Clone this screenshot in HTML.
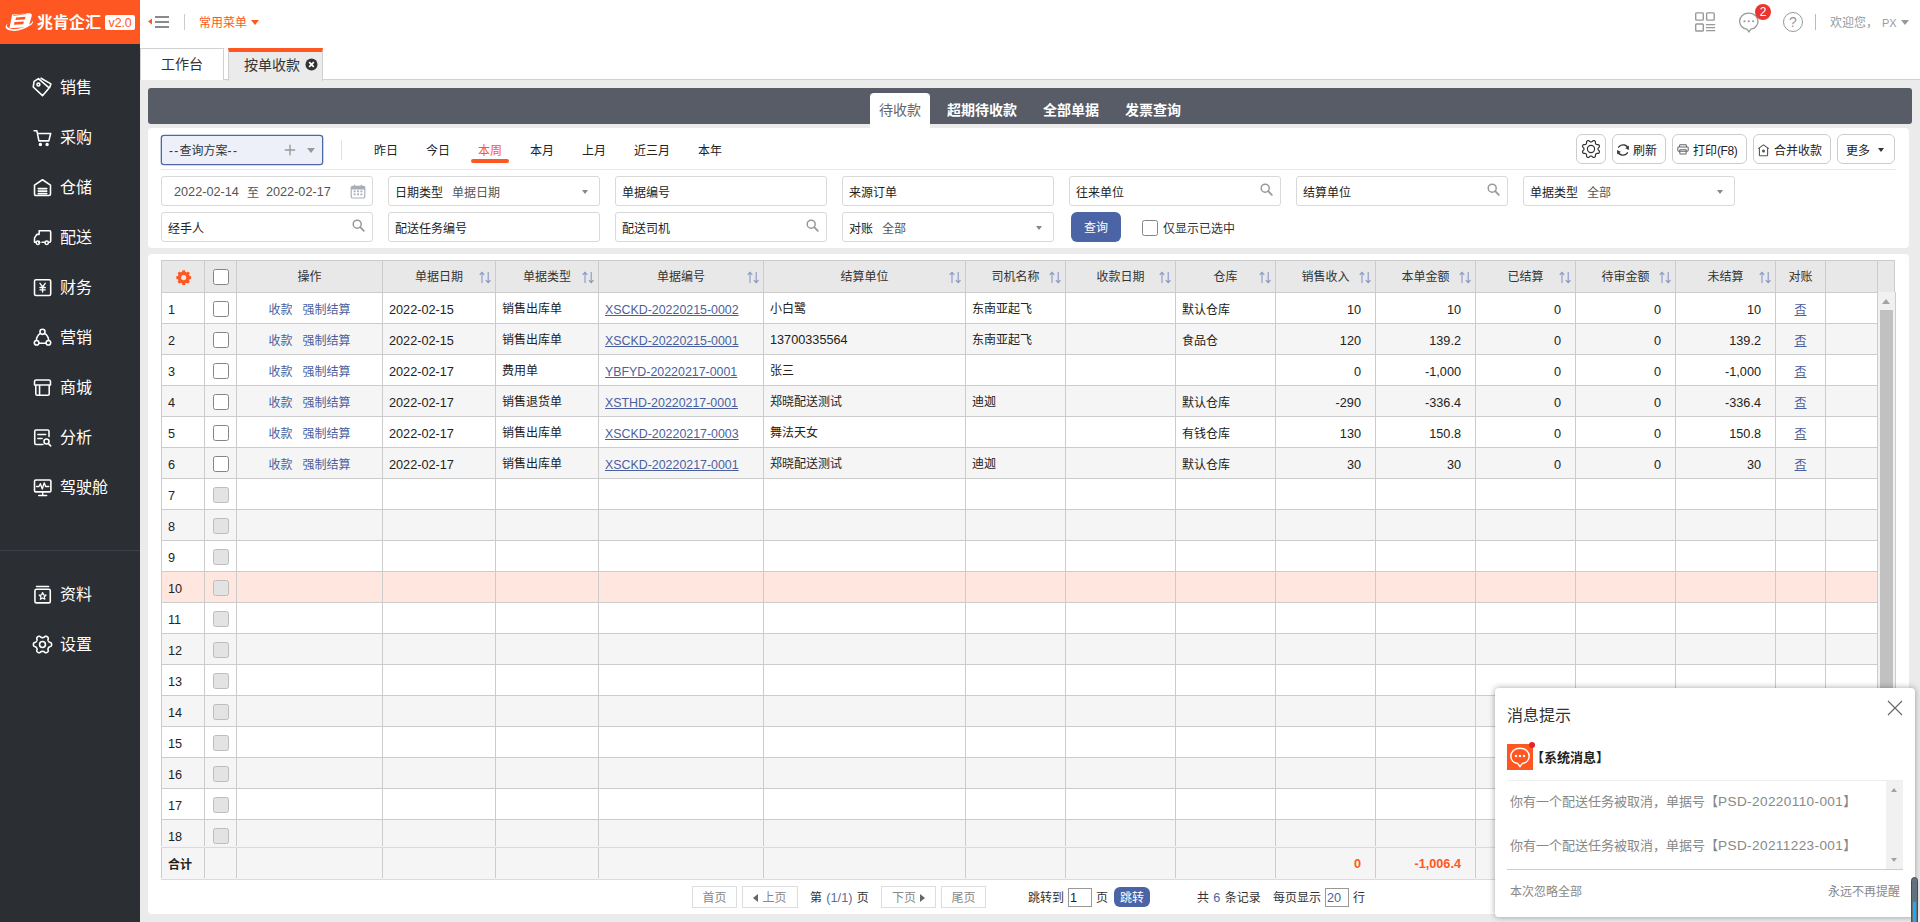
<!DOCTYPE html>
<html lang="zh-CN">
<head>
<meta charset="utf-8">
<title>按单收款</title>
<style>

*{box-sizing:border-box;margin:0;padding:0}
html,body{width:1920px;height:922px;overflow:hidden}
body{background:#ebebeb;font-family:"Liberation Sans","Noto Sans CJK SC",sans-serif;font-size:12px;color:#333;position:relative}
.abs{position:absolute}
svg{display:block}
/* sidebar */
#side{position:absolute;left:0;top:0;width:140px;height:922px;background:#2b2e32}
#logo{position:absolute;left:0;top:0;width:140px;height:44px;background:#ff5722}
#logo .lt{position:absolute;left:37px;top:11px;font-size:16px;line-height:24px;font-weight:bold;color:#fff;white-space:nowrap;letter-spacing:0px}
#logo .ver{position:absolute;left:105px;top:15px;width:30px;height:15px;background:#fff;border-radius:2px;color:#ff5722;font-size:12.5px;line-height:17px;text-align:center;letter-spacing:-0.2px}
.mi{position:absolute;left:0;width:140px;height:50px;color:#fff;font-size:16px;line-height:50px}
.mi span{position:absolute;left:60px;top:0;white-space:nowrap}
.mi svg{position:absolute;left:32px;top:14px}
#sdiv{position:absolute;left:0;top:550px;width:140px;height:1px;background:#3d4046}
/* top bar */
#top{position:absolute;left:140px;top:0;width:1780px;height:44px;background:#fff}
#tabbar{position:absolute;left:140px;top:44px;width:1780px;height:36px;background:#fff;border-bottom:1px solid #d0d0d0}
.tab{position:absolute;top:4px;height:32px;font-size:14px;line-height:30px;color:#333;white-space:nowrap}
/* dark bar */
#dbar{position:absolute;left:148px;top:88px;width:1764px;height:36px;background:#585c66;border-radius:3px}
.dt{position:absolute;top:0;height:36px;line-height:44px;font-size:14px;color:#fff;font-weight:bold;white-space:nowrap}
/* filter */
#filter{position:absolute;left:148px;top:128px;width:1761px;height:120px;background:#fff;border-radius:4px}
.inp{position:absolute;height:30px;width:212px;border:1px solid #d9d9d9;border-radius:3px;background:#fff;font-size:12px;line-height:28px;padding-left:6px;padding-top:1.5px;color:#222;white-space:nowrap}
.inp i{font-style:normal;color:#555;margin-left:9px}
.dtab{position:absolute;top:142px;font-size:12px;line-height:18px;color:#222;white-space:nowrap}
.btn{position:absolute;top:134px;height:30px;border:1px solid #cdcdcd;border-radius:6px;background:#fff;font-size:12px;line-height:28px;padding-top:2px;color:#222;white-space:nowrap}
.num{font-size:12.7px}
/* table panel */
#tpanel{position:absolute;left:148px;top:254px;width:1761px;height:660px;background:#fff;border-radius:4px}

#tbl{overflow:hidden;border-left:0}
.hrow{position:absolute;left:0;top:0;width:1735px;height:33px}
.hc{position:absolute;top:0;height:33px;border-left:1px solid #ccc;border-top:1px solid #ccc;border-bottom:1px solid #ccc;background:#e8e8e8;text-align:center;font-size:12px;line-height:32px;color:#333;white-space:nowrap}
.hrow .hc:last-child{border-right:1px solid #ccc}
#tbody{position:absolute;left:0;top:33px;width:1717px;height:553px;overflow:hidden}
.row{position:absolute;left:0;width:1717px;height:31px;background:#fff}
.row.alt{background:#f5f5f5}
.row.hl{background:#ffe6de}
.c{position:absolute;top:0;height:31px;border-left:1px solid #ccc;border-bottom:1px solid #ccc;padding:2px 6px 0 6px;font-size:12px;line-height:30px;color:#222;white-space:nowrap;overflow:hidden}
.c.up{padding-top:1px}
.c.ctr{text-align:center;padding-left:0;padding-right:0}
.c.rt{text-align:right;padding-right:14px}
.c a{color:#4a5f9e}
.c a.lnk{text-decoration:underline;font-size:12.4px}
.c a.u{text-decoration:underline}
.red{color:#ff5722}
.cb{position:absolute;left:8px;top:8px;width:16px;height:16px;border:1px solid #858585;border-radius:2.5px;background:#fff}
.cb.dis{border-color:#bdbdbd;background:#e3e3e3}
.pb{position:absolute;top:886px;height:22px;border:1px solid #ddd;background:#fff;color:#888;font-size:12px;line-height:20px;padding-top:1px;text-align:center;white-space:nowrap}
.pb i{display:inline-block;width:0;height:0;border-top:4.5px solid transparent;border-bottom:4.5px solid transparent;vertical-align:0px}
.pb i.tl{border-right:5px solid #666;margin-right:4px}
.pb i.tr{border-left:5px solid #666;margin-left:4px}
.pt{position:absolute;top:889px;font-size:12px;line-height:18px;color:#333;white-space:nowrap;word-spacing:1px}
.pi{position:absolute;top:888px;width:24px;height:19px;border:1px solid #999;background:#fff;font-size:12.7px;line-height:18px;padding-left:1px;color:#222}

#pop{position:absolute;left:1495px;top:688px;width:420px;height:229px;background:#fff;border-radius:4px;box-shadow:0 0 6px rgba(0,0,0,0.36)}
.pl{font-size:13.6px;letter-spacing:0.38px}
.pm{position:absolute;left:3px;font-size:13px;line-height:20px;color:#888;white-space:nowrap}

</style>
</head>
<body>
<div id="side">
<div id="logo"><svg class="abs" style="left:4px;top:11px" width="32" height="22" viewBox="0 0 32 22"><path d="M8.2 3.4 L25 2.2 Q28.6 2.2 27.6 5.6 L25.2 13.6 Q24.4 16 21.6 16.2 L5.4 17.2 Z" fill="#fff"/><path d="M12.2 6.4 L21.6 5.8 L20.8 8.4 L11.4 9 Z M10.6 11 L20 10.4 L19.2 13.2 L9.8 13.8 Z" fill="#ff5722"/><path d="M9.4 4.6 L22 2.6" stroke="#ff5722" stroke-width="0.8"/><path d="M3.6 12.6 Q-1.6 17.4 6.6 19.6 Q16 21.4 27.6 13.4 Q29.4 11.8 29 9.8 Q27 14 18.6 16.8 Q8.4 19.6 3.8 16.6 Q2.2 15.2 3.6 12.6 Z" fill="#fff"/></svg><div class="lt">兆肯企汇</div><div class="ver">v2.0</div></div>
<div class="mi" style="top:63px"><svg width="21" height="21" viewBox="-1 -1 20 20"><g stroke="#fff" stroke-width="1.5" fill="none" stroke-linecap="round" stroke-linejoin="round"><path d="M1 3.1 L5.1 0.5 L15.3 9.4 L9 16.8 L0.2 8.5 Z M7.6 0.2 L17 5.6 L15.8 9"/><circle cx="5.1" cy="6.2" r="1.4"/></g></svg><span>销售</span></div>
<div class="mi" style="top:113px"><svg width="21" height="21" viewBox="-1 -1 20 20"><g stroke="#fff" stroke-width="1.5" fill="none" stroke-linecap="round" stroke-linejoin="round"><path d="M1 2.5 H3.6 L5.6 12.2 H15 L16.8 5.2 H4.4"/><circle cx="7" cy="15.6" r="0.9" fill="#fff"/><circle cx="13.4" cy="15.6" r="0.9" fill="#fff"/></g></svg><span>采购</span></div>
<div class="mi" style="top:163px"><svg width="21" height="21" viewBox="-1 -1 20 20"><g stroke="#fff" stroke-width="1.5" fill="none" stroke-linecap="round" stroke-linejoin="round"><path d="M1.4 6.8 L9 1.6 L16.6 6.8 V15.2 Q16.6 16.6 15.2 16.6 H2.8 Q1.4 16.6 1.4 15.2 Z"/><path d="M5 10 H13 M5 12.4 H13 M5 14.8 H13" stroke-width="1.6"/></g></svg><span>仓储</span></div>
<div class="mi" style="top:213px"><svg width="21" height="21" viewBox="-1 -1 20 20"><g stroke="#fff" stroke-width="1.5" fill="none" stroke-linecap="round" stroke-linejoin="round"><path d="M6.4 13.6 H5.4 M11 13.6 H8.6 M5.8 2.6 H15.6 Q16.8 2.6 16.8 3.8 V12.4 Q16.8 13.6 15.6 13.6 H15.2 M5.8 2.6 V6 H3.6 L1.4 9.4 V13.6 H3"/><circle cx="4.6" cy="14" r="1.6"/><circle cx="13" cy="14" r="1.6"/></g></svg><span>配送</span></div>
<div class="mi" style="top:263px"><svg width="21" height="21" viewBox="-1 -1 20 20"><g stroke="#fff" stroke-width="1.5" fill="none" stroke-linecap="round" stroke-linejoin="round"><rect x="1.4" y="1.6" width="15.4" height="15" rx="1.4"/><path d="M6.6 5 L9.1 8.4 L11.6 5 M9.1 8.4 V13.4 M6.6 9 H11.6 M6.6 11.2 H11.6" stroke-width="1.3"/></g></svg><span>财务</span></div>
<div class="mi" style="top:313px"><svg width="21" height="21" viewBox="-1 -1 20 20"><g stroke="#fff" stroke-width="1.5" fill="none" stroke-linecap="round" stroke-linejoin="round"><circle cx="9" cy="3.6" r="2.4"/><circle cx="3.4" cy="14" r="2.2"/><circle cx="14.6" cy="14" r="2.2"/><path d="M7 5 Q3.2 7.6 3.2 11.6 M11 5 Q14.8 7.6 14.8 11.6 M5.8 14.4 H12.2"/></g></svg><span>营销</span></div>
<div class="mi" style="top:363px"><svg width="21" height="21" viewBox="-1 -1 20 20"><g stroke="#fff" stroke-width="1.5" fill="none" stroke-linecap="round" stroke-linejoin="round"><path d="M1.4 6.6 V3.4 Q1.4 1.8 3 1.8 H15 Q16.6 1.8 16.6 3.4 V6.6 Z M2.6 6.6 V15 Q2.6 16.4 4 16.4 H14 Q15.4 16.4 15.4 15 V6.6 M6.2 6.8 V16.2"/></g></svg><span>商城</span></div>
<div class="mi" style="top:413px"><svg width="21" height="21" viewBox="-1 -1 20 20"><g stroke="#fff" stroke-width="1.5" fill="none" stroke-linecap="round" stroke-linejoin="round"><path d="M15.2 8 V3 Q15.2 1.8 14 1.8 H2.8 Q1.6 1.8 1.6 3 V14.4 Q1.6 15.6 2.8 15.6 H9.4 M4.6 6.2 H12 M4.6 10 H8.6"/><circle cx="12.8" cy="12.8" r="2.4"/><path d="M14.6 14.8 L16.8 17"/></g></svg><span>分析</span></div>
<div class="mi" style="top:463px"><svg width="21" height="21" viewBox="-1 -1 20 20"><g stroke="#fff" stroke-width="1.5" fill="none" stroke-linecap="round" stroke-linejoin="round"><rect x="1.4" y="1.8" width="15.6" height="11.4" rx="1.2"/><path d="M9.2 13.2 V16.4 M5.4 16.6 H13 M3.4 8 H5.6 L7 5.4 L8.8 10.4 L10.6 4.6 L12 8 H15" stroke-width="1.3"/></g></svg><span>驾驶舱</span></div>
<div class="mi" style="top:570px"><svg width="21" height="21" viewBox="-1 -1 20 20"><g stroke="#fff" stroke-width="1.5" fill="none" stroke-linecap="round" stroke-linejoin="round"><path d="M3.4 1.4 H14.8"/><rect x="1.8" y="4" width="14.6" height="13" rx="1.4"/><path d="M9.1 7.2 L10.1 9.4 L12.4 9.6 L10.7 11.2 L11.2 13.5 L9.1 12.3 L7 13.5 L7.5 11.2 L5.8 9.6 L8.1 9.4 Z" stroke-width="1.2"/></g></svg><span>资料</span></div>
<div class="mi" style="top:620px"><svg width="21" height="21" viewBox="-1 -1 20 20"><g stroke="#fff" stroke-width="1.5" fill="none" stroke-linecap="round" stroke-linejoin="round"><path d="M13.35 1.47 L13.72 1.73 L14.05 2.05 L14.31 2.44 L14.49 2.90 L14.37 3.63 L14.19 4.32 L14.25 4.75 L14.35 5.11 L14.47 5.45 L14.63 5.75 L14.82 6.04 L15.04 6.31 L15.31 6.58 L15.65 6.84 L16.34 7.03 L17.03 7.29 L17.34 7.68 L17.54 8.10 L17.66 8.55 L17.70 9.00 L17.66 9.45 L17.54 9.90 L17.34 10.32 L17.03 10.71 L16.34 10.97 L15.65 11.16 L15.31 11.42 L15.04 11.69 L14.82 11.96 L14.63 12.25 L14.47 12.55 L14.35 12.89 L14.25 13.25 L14.19 13.68 L14.37 14.37 L14.49 15.10 L14.31 15.56 L14.05 15.95 L13.72 16.27 L13.35 16.53 L12.94 16.73 L12.49 16.85 L12.03 16.88 L11.54 16.81 L10.97 16.34 L10.45 15.84 L10.06 15.67 L9.69 15.57 L9.34 15.52 L9.00 15.50 L8.66 15.52 L8.31 15.57 L7.94 15.67 L7.55 15.84 L7.03 16.34 L6.46 16.81 L5.97 16.88 L5.51 16.85 L5.06 16.73 L4.65 16.53 L4.28 16.27 L3.95 15.95 L3.69 15.56 L3.51 15.10 L3.63 14.37 L3.81 13.68 L3.75 13.25 L3.65 12.89 L3.53 12.55 L3.37 12.25 L3.18 11.96 L2.96 11.69 L2.69 11.42 L2.35 11.16 L1.66 10.97 L0.97 10.71 L0.66 10.32 L0.46 9.90 L0.34 9.45 L0.30 9.00 L0.34 8.55 L0.46 8.10 L0.66 7.68 L0.97 7.29 L1.66 7.03 L2.35 6.84 L2.69 6.58 L2.96 6.31 L3.18 6.04 L3.37 5.75 L3.53 5.45 L3.65 5.11 L3.75 4.75 L3.81 4.32 L3.63 3.63 L3.51 2.90 L3.69 2.44 L3.95 2.05 L4.28 1.73 L4.65 1.47 L5.06 1.27 L5.51 1.15 L5.97 1.12 L6.46 1.19 L7.03 1.66 L7.55 2.16 L7.94 2.33 L8.31 2.43 L8.66 2.48 L9.00 2.50 L9.34 2.48 L9.69 2.43 L10.06 2.33 L10.45 2.16 L10.97 1.66 L11.54 1.19 L12.03 1.12 L12.49 1.15 L12.94 1.27 Z"/><circle cx="9" cy="9" r="2.8"/></g></svg><span>设置</span></div>
<div id="sdiv"></div>
</div>
<div id="top">
<svg class="abs" style="left:7px;top:13px" width="24" height="16" viewBox="0 0 24 16"><path d="M1 8.5 L5 5.5 V11.5 Z" fill="#ff5722"/><path d="M8 3.9 H22 M8 9 H22 M8 13.9 H22" stroke="#8a8a8a" stroke-width="2"/></svg>
<div class="abs" style="left:44px;top:14px;width:1px;height:16px;background:#ccc"></div>
<div class="abs" style="left:59px;top:14px;font-size:12px;line-height:18px;color:#ff5722;white-space:nowrap">常用菜单</div>
<div class="abs" style="left:111px;top:20px;width:0;height:0;border-left:4.5px solid transparent;border-right:4.5px solid transparent;border-top:5px solid #ff5722"></div>
<svg class="abs" style="left:1554px;top:11px" width="23" height="22" viewBox="0 0 23 22"><g fill="none" stroke="#999" stroke-width="1.4"><rect x="1.7" y="1.9" width="7.6" height="7.2" rx="0.8"/><rect x="12.6" y="1.9" width="7.6" height="7.2" rx="0.8"/><rect x="1.7" y="13" width="7.6" height="7" rx="0.8"/><path d="M12 13.6 H21.2 M12 16.7 H21.2 M12 19.6 H21.2" stroke-width="1.2"/></g></svg>
<svg class="abs" style="left:1598px;top:11px" width="24" height="22" viewBox="0 0 24 22"><path d="M10.75 2.2 C5.6 2.2 1.6 5.6 1.6 10.2 C1.6 14.3 4.6 17.6 8.9 18.2 L10.9 20.8 L12.8 18.2 C17 17.6 20 14.3 20 10.2 C20 5.6 15.9 2.2 10.75 2.2 Z" fill="none" stroke="#999" stroke-width="1.3"/><circle cx="6.4" cy="10.3" r="1.05" fill="#999"/><circle cx="10.75" cy="10.3" r="1.05" fill="#999"/><circle cx="15.1" cy="10.3" r="1.05" fill="#999"/></svg>
<div class="abs" style="left:1615px;top:4px;width:16px;height:16px;border-radius:8px;background:#e8352f;color:#fff;font-size:12px;line-height:16px;text-align:center">2</div>
<div class="abs" style="left:1643px;top:12px;width:20px;height:20px;border-radius:10px;border:1.3px solid #999;color:#999;font-size:14px;line-height:18px;text-align:center">?</div>
<div class="abs" style="left:1675px;top:14px;width:1px;height:16px;background:#bbb"></div>
<div class="abs" style="left:1690px;top:14px;font-size:12px;line-height:18px;color:#999;white-space:nowrap">欢迎您，<span style="margin-left:4px;font-size:11px">PX</span></div>
<div class="abs" style="left:1761px;top:20px;width:0;height:0;border-left:4.5px solid transparent;border-right:4.5px solid transparent;border-top:5px solid #999"></div>
</div>
<div id="tabbar">
<div class="tab" style="left:0;width:84px;border:1px solid #d0d0d0;border-bottom:none;text-align:center;background:#fff">工作台</div>
<div class="tab" style="left:88px;width:95px;height:33px;border:1px solid #d0d0d0;border-top:4px solid #ff5722;border-bottom:none;background:#ebebeb;padding-left:15px;line-height:27px">按单收款<svg class="abs" style="left:76px;top:6px" width="13" height="13" viewBox="0 0 13 13"><circle cx="6.5" cy="6.5" r="6" fill="#333"/><path d="M4.2 4.2 L8.8 8.8 M8.8 4.2 L4.2 8.8" stroke="#fff" stroke-width="1.7"/></svg></div>
</div>
<div id="dbar">
<div class="abs" style="left:722px;top:5px;width:60px;height:36px;background:#fff;border-radius:4px 4px 0 0;color:#666;font-size:14px;line-height:34px;text-align:center">待收款</div>
<div class="dt" style="left:799px">超期待收款</div>
<div class="dt" style="left:895px">全部单据</div>
<div class="dt" style="left:977px">发票查询</div>
</div>

<div id="filter"></div>
<div class="abs" style="left:161px;top:135px;width:162px;height:30px;border:1px solid #4e67a8;border-radius:3px;background:#edf0f9;box-shadow:0 0 0 0.3px #4e67a8;font-size:12px;line-height:30px;padding-left:7px;color:#333;white-space:nowrap"><span style="letter-spacing:1.3px">--</span>查询方案<span style="letter-spacing:1.3px">--</span><svg class="abs" style="left:122px;top:8px" width="12" height="12" viewBox="0 0 12 12"><path d="M6 0.8 V11.2 M0.8 6 H11.2" stroke="#999" stroke-width="1.4"/></svg><div class="abs" style="left:145px;top:12px;width:0;height:0;border-left:4.5px solid transparent;border-right:4.5px solid transparent;border-top:5.5px solid #999"></div></div>
<div class="abs" style="left:341px;top:140px;width:1px;height:20px;background:#e2e2e2"></div>
<div class="dtab" style="left:374px">昨日</div>
<div class="dtab" style="left:426px">今日</div>
<div class="dtab" style="left:478px;color:#ff5722">本周</div>
<div class="dtab" style="left:530px">本月</div>
<div class="dtab" style="left:582px">上月</div>
<div class="dtab" style="left:634px">近三月</div>
<div class="dtab" style="left:698px">本年</div>
<div class="abs" style="left:471px;top:159px;width:38px;height:4px;border-radius:2px;background:#ff5722"></div>
<div class="abs" style="left:161px;top:169px;width:1735px;height:1px;background:#e8e8e8"></div>
<div class="btn" style="left:1576px;width:30px"><svg class="abs" style="left:4px;top:4px" width="20" height="20" viewBox="-10 -10 20 20"><g fill="none" stroke="#333" stroke-width="1.2" stroke-linejoin="round"><path d="M0.00 -7.00 L0.28 -7.02 L0.56 -7.10 L0.85 -7.22 L1.17 -7.41 L1.56 -7.85 L1.98 -8.26 L2.37 -8.40 L2.74 -8.45 L3.10 -8.42 L3.44 -8.31 L3.76 -8.15 L4.03 -7.91 L4.26 -7.61 L4.44 -7.24 L4.44 -6.65 L4.41 -6.07 L4.50 -5.71 L4.62 -5.41 L4.77 -5.16 L4.95 -4.95 L5.16 -4.77 L5.41 -4.62 L5.71 -4.50 L6.07 -4.41 L6.65 -4.44 L7.24 -4.44 L7.61 -4.26 L7.91 -4.03 L8.15 -3.76 L8.31 -3.44 L8.42 -3.10 L8.45 -2.74 L8.40 -2.37 L8.26 -1.98 L7.85 -1.56 L7.41 -1.17 L7.22 -0.85 L7.10 -0.56 L7.02 -0.28 L7.00 -0.00 L7.02 0.28 L7.10 0.56 L7.22 0.85 L7.41 1.17 L7.85 1.56 L8.26 1.98 L8.40 2.37 L8.45 2.74 L8.42 3.10 L8.31 3.44 L8.15 3.76 L7.91 4.03 L7.61 4.26 L7.24 4.44 L6.65 4.44 L6.07 4.41 L5.71 4.50 L5.41 4.62 L5.16 4.77 L4.95 4.95 L4.77 5.16 L4.62 5.41 L4.50 5.71 L4.41 6.07 L4.44 6.65 L4.44 7.24 L4.26 7.61 L4.03 7.91 L3.76 8.15 L3.44 8.31 L3.10 8.42 L2.74 8.45 L2.37 8.40 L1.98 8.26 L1.56 7.85 L1.17 7.41 L0.85 7.22 L0.56 7.10 L0.28 7.02 L0.00 7.00 L-0.28 7.02 L-0.56 7.10 L-0.85 7.22 L-1.17 7.41 L-1.56 7.85 L-1.98 8.26 L-2.37 8.40 L-2.74 8.45 L-3.10 8.42 L-3.44 8.31 L-3.76 8.15 L-4.03 7.91 L-4.26 7.61 L-4.44 7.24 L-4.44 6.65 L-4.41 6.07 L-4.50 5.71 L-4.62 5.41 L-4.77 5.16 L-4.95 4.95 L-5.16 4.77 L-5.41 4.62 L-5.71 4.50 L-6.07 4.41 L-6.65 4.44 L-7.24 4.44 L-7.61 4.26 L-7.91 4.03 L-8.15 3.76 L-8.31 3.44 L-8.42 3.10 L-8.45 2.74 L-8.40 2.37 L-8.26 1.98 L-7.85 1.56 L-7.41 1.17 L-7.22 0.85 L-7.10 0.56 L-7.02 0.28 L-7.00 0.00 L-7.02 -0.28 L-7.10 -0.56 L-7.22 -0.85 L-7.41 -1.17 L-7.85 -1.56 L-8.26 -1.98 L-8.40 -2.37 L-8.45 -2.74 L-8.42 -3.10 L-8.31 -3.44 L-8.15 -3.76 L-7.91 -4.03 L-7.61 -4.26 L-7.24 -4.44 L-6.65 -4.44 L-6.07 -4.41 L-5.71 -4.50 L-5.41 -4.62 L-5.16 -4.77 L-4.95 -4.95 L-4.77 -5.16 L-4.62 -5.41 L-4.50 -5.71 L-4.41 -6.07 L-4.44 -6.65 L-4.44 -7.24 L-4.26 -7.61 L-4.03 -7.91 L-3.76 -8.15 L-3.44 -8.31 L-3.10 -8.42 L-2.74 -8.45 L-2.37 -8.40 L-1.98 -8.26 L-1.56 -7.85 L-1.17 -7.41 L-0.85 -7.22 L-0.56 -7.10 L-0.28 -7.02 Z"/><circle cx="0" cy="0" r="3.6"/></g></svg></div>
<div class="btn" style="left:1612px;width:54px;padding-left:20px"><svg class="abs" style="left:3px;top:8px" width="14" height="14" viewBox="0 0 14 14"><g fill="none" stroke="#333" stroke-width="1.3" stroke-linecap="round"><path d="M12.2 6.2 A5.3 5.3 0 0 0 2.6 4.2"/><path d="M1.8 7.8 A5.3 5.3 0 0 0 11.4 9.8"/></g><path d="M12.9 2.6 L12.6 6.6 L9.2 5.2 Z M1.1 11.4 L1.4 7.4 L4.8 8.8 Z" fill="#333"/></svg>刷新</div>
<div class="btn" style="left:1672px;width:75px;padding-left:20px"><svg class="abs" style="left:4px;top:9px" width="12" height="11" viewBox="0 0 13 12"><g fill="none" stroke="#666" stroke-width="1.1" stroke-linejoin="round"><path d="M2.8 3.4 V1.6 Q2.8 0.8 3.6 0.8 H9.4 Q10.2 0.8 10.2 1.6 V3.4"/><rect x="0.8" y="3.4" width="11.4" height="4.4" rx="1"/><path d="M3 6.2 H10 V10.2 Q10 11 9.2 11 H3.8 Q3 11 3 10.2 Z"/></g></svg>打印<span style="letter-spacing:-0.4px">(F8)</span></div>
<div class="btn" style="left:1753px;width:78px;padding-left:20px"><svg class="abs" style="left:3px;top:9px" width="13" height="13" viewBox="0 0 13 13"><g fill="none" stroke="#555" stroke-width="1.1" stroke-linejoin="round"><path d="M1.2 4.6 L6.5 0.9 L11.8 4.6"/><path d="M2.4 4 V11 Q2.4 11.8 3.2 11.8 H9.8 Q10.6 11.8 10.6 11 V4"/></g><circle cx="6.5" cy="7" r="1.5" fill="#555"/></svg>合并收款</div>
<div class="btn" style="left:1837px;width:58px;padding-left:8px">更多<div class="abs" style="left:40px;top:13px;width:0;height:0;border-left:3.5px solid transparent;border-right:3.5px solid transparent;border-top:4px solid #333"></div></div>
<div class="inp" style="left:161px;top:176px;padding-left:12px;color:#555;padding-top:1px"><span class="num">2022-02-14</span><span style="margin:0 7px 0 8px;position:relative;top:1px">至</span><span class="num">2022-02-17</span><svg class="abs" style="left:188px;top:7px" width="16" height="15" viewBox="0 0 16 15"><rect x="1.2" y="2.4" width="13.6" height="11.6" rx="1.4" fill="#fff" stroke="#a9adbb" stroke-width="1.2"/><path d="M1.2 3.8 Q1.2 2.4 2.6 2.4 H13.4 Q14.8 2.4 14.8 3.8 V5.4 H1.2 Z" fill="#a9adbb"/><path d="M4.6 0.8 V3.4 M11.4 0.8 V3.4" stroke="#a9adbb" stroke-width="1.3"/><path d="M3.6 7.4 H5.6 M7 7.4 H9 M10.4 7.4 H12.4 M3.6 10.4 H5.6 M7 10.4 H9 M10.4 10.4 H12.4" stroke="#a9adbb" stroke-width="1.6"/></svg></div>
<div class="inp" style="left:388px;top:176px">日期类型<i>单据日期</i><div class="abs" style="right:11px;top:13px;width:0;height:0;border-left:3.5px solid transparent;border-right:3.5px solid transparent;border-top:4px solid #888"></div></div>
<div class="inp" style="left:615px;top:176px">单据编号</div>
<div class="inp" style="left:842px;top:176px">来源订单</div>
<div class="inp" style="left:1069px;top:176px">往来单位<svg class="abs" style="right:7px;top:6px" width="13" height="13" viewBox="0 0 13 13"><circle cx="5.2" cy="5.2" r="4" fill="none" stroke="#999" stroke-width="1.5"/><path d="M8.2 8.2 L11.8 11.8" stroke="#999" stroke-width="1.8" stroke-linecap="round"/></svg></div>
<div class="inp" style="left:1296px;top:176px">结算单位<svg class="abs" style="right:7px;top:6px" width="13" height="13" viewBox="0 0 13 13"><circle cx="5.2" cy="5.2" r="4" fill="none" stroke="#999" stroke-width="1.5"/><path d="M8.2 8.2 L11.8 11.8" stroke="#999" stroke-width="1.8" stroke-linecap="round"/></svg></div>
<div class="inp" style="left:1523px;top:176px">单据类型<i>全部</i><div class="abs" style="right:11px;top:13px;width:0;height:0;border-left:3.5px solid transparent;border-right:3.5px solid transparent;border-top:4px solid #888"></div></div>
<div class="inp" style="left:161px;top:212px">经手人<svg class="abs" style="right:7px;top:6px" width="13" height="13" viewBox="0 0 13 13"><circle cx="5.2" cy="5.2" r="4" fill="none" stroke="#999" stroke-width="1.5"/><path d="M8.2 8.2 L11.8 11.8" stroke="#999" stroke-width="1.8" stroke-linecap="round"/></svg></div>
<div class="inp" style="left:388px;top:212px">配送任务编号</div>
<div class="inp" style="left:615px;top:212px">配送司机<svg class="abs" style="right:7px;top:6px" width="13" height="13" viewBox="0 0 13 13"><circle cx="5.2" cy="5.2" r="4" fill="none" stroke="#999" stroke-width="1.5"/><path d="M8.2 8.2 L11.8 11.8" stroke="#999" stroke-width="1.8" stroke-linecap="round"/></svg></div>
<div class="inp" style="left:842px;top:212px">对账<i>全部</i><div class="abs" style="right:11px;top:13px;width:0;height:0;border-left:3.5px solid transparent;border-right:3.5px solid transparent;border-top:4px solid #888"></div></div>
<div class="abs" style="left:1071px;top:212px;width:50px;height:30px;border-radius:6px;background:#4a64a6;color:#fff;font-size:12px;line-height:32px;text-align:center">查询</div>
<div class="abs" style="left:1142px;top:220px;width:16px;height:16px;border:1px solid #858585;border-radius:2.5px;background:#fff"></div>
<div class="abs" style="left:1163px;top:220px;font-size:12px;line-height:18px;color:#333;white-space:nowrap">仅显示已选中</div>

<div id="tpanel"></div>
<div id="tbl" class="abs" style="left:161px;top:260px;width:1735px;height:620px">
<div class="hrow"><div class="hc" style="left:0px;width:43px"><svg class="abs" style="left:14px;top:9px" width="16" height="16" viewBox="-7.7 -7.6 16 16"><path fill="#ff5722" fill-rule="evenodd" d="M-1.54 -5.80 L-1.35 -7.38 L1.35 -7.38 L1.54 -5.80 L3.01 -5.19 L4.26 -6.17 L6.17 -4.26 L5.19 -3.01 L5.80 -1.54 L7.38 -1.35 L7.38 1.35 L5.80 1.54 L5.19 3.01 L6.17 4.26 L4.26 6.17 L3.01 5.19 L1.54 5.80 L1.35 7.38 L-1.35 7.38 L-1.54 5.80 L-3.01 5.19 L-4.26 6.17 L-6.17 4.26 L-5.19 3.01 L-5.80 1.54 L-7.38 1.35 L-7.38 -1.35 L-5.80 -1.54 L-5.19 -3.01 L-6.17 -4.26 L-4.26 -6.17 L-3.01 -5.19 Z M2.60 0 A2.60 2.60 0 1 0 -2.60 0 A2.60 2.60 0 1 0 2.60 0 Z"/></svg></div><div class="hc" style="left:43px;width:32px"><div class="cb" style="top:8px"></div></div><div class="hc" style="left:75px;width:146px"><span>操作</span></div><div class="hc" style="left:221px;width:113px"><span>单据日期</span><svg class="abs" style="right:4px;top:10px" width="12" height="13" viewBox="0 0 12 13"><g fill="none" stroke="#8595c4" stroke-width="1.05"><path d="M3 11.9 V1.3 M0.7 3.8 L3 1.2 L5.3 3.8"/><path d="M9.2 1 V11.6 M6.9 9.1 L9.2 11.7 L11.5 9.1"/></g></svg></div><div class="hc" style="left:334px;width:103px"><span>单据类型</span><svg class="abs" style="right:4px;top:10px" width="12" height="13" viewBox="0 0 12 13"><g fill="none" stroke="#8595c4" stroke-width="1.05"><path d="M3 11.9 V1.3 M0.7 3.8 L3 1.2 L5.3 3.8"/><path d="M9.2 1 V11.6 M6.9 9.1 L9.2 11.7 L11.5 9.1"/></g></svg></div><div class="hc" style="left:437px;width:165px"><span>单据编号</span><svg class="abs" style="right:4px;top:10px" width="12" height="13" viewBox="0 0 12 13"><g fill="none" stroke="#8595c4" stroke-width="1.05"><path d="M3 11.9 V1.3 M0.7 3.8 L3 1.2 L5.3 3.8"/><path d="M9.2 1 V11.6 M6.9 9.1 L9.2 11.7 L11.5 9.1"/></g></svg></div><div class="hc" style="left:602px;width:202px"><span>结算单位</span><svg class="abs" style="right:4px;top:10px" width="12" height="13" viewBox="0 0 12 13"><g fill="none" stroke="#8595c4" stroke-width="1.05"><path d="M3 11.9 V1.3 M0.7 3.8 L3 1.2 L5.3 3.8"/><path d="M9.2 1 V11.6 M6.9 9.1 L9.2 11.7 L11.5 9.1"/></g></svg></div><div class="hc" style="left:804px;width:100px"><span>司机名称</span><svg class="abs" style="right:4px;top:10px" width="12" height="13" viewBox="0 0 12 13"><g fill="none" stroke="#8595c4" stroke-width="1.05"><path d="M3 11.9 V1.3 M0.7 3.8 L3 1.2 L5.3 3.8"/><path d="M9.2 1 V11.6 M6.9 9.1 L9.2 11.7 L11.5 9.1"/></g></svg></div><div class="hc" style="left:904px;width:110px"><span>收款日期</span><svg class="abs" style="right:4px;top:10px" width="12" height="13" viewBox="0 0 12 13"><g fill="none" stroke="#8595c4" stroke-width="1.05"><path d="M3 11.9 V1.3 M0.7 3.8 L3 1.2 L5.3 3.8"/><path d="M9.2 1 V11.6 M6.9 9.1 L9.2 11.7 L11.5 9.1"/></g></svg></div><div class="hc" style="left:1014px;width:100px"><span>仓库</span><svg class="abs" style="right:4px;top:10px" width="12" height="13" viewBox="0 0 12 13"><g fill="none" stroke="#8595c4" stroke-width="1.05"><path d="M3 11.9 V1.3 M0.7 3.8 L3 1.2 L5.3 3.8"/><path d="M9.2 1 V11.6 M6.9 9.1 L9.2 11.7 L11.5 9.1"/></g></svg></div><div class="hc" style="left:1114px;width:100px"><span>销售收入</span><svg class="abs" style="right:4px;top:10px" width="12" height="13" viewBox="0 0 12 13"><g fill="none" stroke="#8595c4" stroke-width="1.05"><path d="M3 11.9 V1.3 M0.7 3.8 L3 1.2 L5.3 3.8"/><path d="M9.2 1 V11.6 M6.9 9.1 L9.2 11.7 L11.5 9.1"/></g></svg></div><div class="hc" style="left:1214px;width:100px"><span>本单金额</span><svg class="abs" style="right:4px;top:10px" width="12" height="13" viewBox="0 0 12 13"><g fill="none" stroke="#8595c4" stroke-width="1.05"><path d="M3 11.9 V1.3 M0.7 3.8 L3 1.2 L5.3 3.8"/><path d="M9.2 1 V11.6 M6.9 9.1 L9.2 11.7 L11.5 9.1"/></g></svg></div><div class="hc" style="left:1314px;width:100px"><span>已结算</span><svg class="abs" style="right:4px;top:10px" width="12" height="13" viewBox="0 0 12 13"><g fill="none" stroke="#8595c4" stroke-width="1.05"><path d="M3 11.9 V1.3 M0.7 3.8 L3 1.2 L5.3 3.8"/><path d="M9.2 1 V11.6 M6.9 9.1 L9.2 11.7 L11.5 9.1"/></g></svg></div><div class="hc" style="left:1414px;width:100px"><span>待审金额</span><svg class="abs" style="right:4px;top:10px" width="12" height="13" viewBox="0 0 12 13"><g fill="none" stroke="#8595c4" stroke-width="1.05"><path d="M3 11.9 V1.3 M0.7 3.8 L3 1.2 L5.3 3.8"/><path d="M9.2 1 V11.6 M6.9 9.1 L9.2 11.7 L11.5 9.1"/></g></svg></div><div class="hc" style="left:1514px;width:100px"><span>未结算</span><svg class="abs" style="right:4px;top:10px" width="12" height="13" viewBox="0 0 12 13"><g fill="none" stroke="#8595c4" stroke-width="1.05"><path d="M3 11.9 V1.3 M0.7 3.8 L3 1.2 L5.3 3.8"/><path d="M9.2 1 V11.6 M6.9 9.1 L9.2 11.7 L11.5 9.1"/></g></svg></div><div class="hc" style="left:1614px;width:50px"><span>对账</span></div><div class="hc" style="left:1664px;width:52px"></div><div class="hc" style="left:1716px;width:18px"></div></div>
<div id="tbody">
<div class="row" style="top:0px"><div class="c" style="left:0px;width:43px"><span class="num">1</span></div><div class="c" style="left:43px;width:32px"><div class="cb"></div></div><div class="c ctr" style="left:75px;width:146px"><a>收款</a><a style="margin-left:10px">强制结算</a></div><div class="c" style="left:221px;width:113px"><span class="num">2022-02-15</span></div><div class="c up" style="left:334px;width:103px">销售出库单</div><div class="c" style="left:437px;width:165px"><a class="lnk">XSCKD-20220215-0002</a></div><div class="c up" style="left:602px;width:202px">小白鹭</div><div class="c up" style="left:804px;width:100px">东南亚起飞</div><div class="c" style="left:904px;width:110px"></div><div class="c" style="left:1014px;width:100px">默认仓库</div><div class="c rt" style="left:1114px;width:100px"><span class="num">10</span></div><div class="c rt" style="left:1214px;width:100px"><span class="num">10</span></div><div class="c rt" style="left:1314px;width:100px"><span class="num">0</span></div><div class="c rt" style="left:1414px;width:100px"><span class="num">0</span></div><div class="c rt" style="left:1514px;width:100px"><span class="num">10</span></div><div class="c ctr" style="left:1614px;width:50px"><a class="u">否</a></div><div class="c" style="left:1664px;width:52px"></div></div>
<div class="row alt" style="top:31px"><div class="c" style="left:0px;width:43px"><span class="num">2</span></div><div class="c" style="left:43px;width:32px"><div class="cb"></div></div><div class="c ctr" style="left:75px;width:146px"><a>收款</a><a style="margin-left:10px">强制结算</a></div><div class="c" style="left:221px;width:113px"><span class="num">2022-02-15</span></div><div class="c up" style="left:334px;width:103px">销售出库单</div><div class="c" style="left:437px;width:165px"><a class="lnk">XSCKD-20220215-0001</a></div><div class="c up" style="left:602px;width:202px"><span class="num">13700335564</span></div><div class="c up" style="left:804px;width:100px">东南亚起飞</div><div class="c" style="left:904px;width:110px"></div><div class="c" style="left:1014px;width:100px">食品仓</div><div class="c rt" style="left:1114px;width:100px"><span class="num">120</span></div><div class="c rt" style="left:1214px;width:100px"><span class="num">139.2</span></div><div class="c rt" style="left:1314px;width:100px"><span class="num">0</span></div><div class="c rt" style="left:1414px;width:100px"><span class="num">0</span></div><div class="c rt" style="left:1514px;width:100px"><span class="num">139.2</span></div><div class="c ctr" style="left:1614px;width:50px"><a class="u">否</a></div><div class="c" style="left:1664px;width:52px"></div></div>
<div class="row" style="top:62px"><div class="c" style="left:0px;width:43px"><span class="num">3</span></div><div class="c" style="left:43px;width:32px"><div class="cb"></div></div><div class="c ctr" style="left:75px;width:146px"><a>收款</a><a style="margin-left:10px">强制结算</a></div><div class="c" style="left:221px;width:113px"><span class="num">2022-02-17</span></div><div class="c up" style="left:334px;width:103px">费用单</div><div class="c" style="left:437px;width:165px"><a class="lnk">YBFYD-20220217-0001</a></div><div class="c up" style="left:602px;width:202px">张三</div><div class="c up" style="left:804px;width:100px"></div><div class="c" style="left:904px;width:110px"></div><div class="c" style="left:1014px;width:100px"></div><div class="c rt" style="left:1114px;width:100px"><span class="num">0</span></div><div class="c rt" style="left:1214px;width:100px"><span class="num">-1,000</span></div><div class="c rt" style="left:1314px;width:100px"><span class="num">0</span></div><div class="c rt" style="left:1414px;width:100px"><span class="num">0</span></div><div class="c rt" style="left:1514px;width:100px"><span class="num">-1,000</span></div><div class="c ctr" style="left:1614px;width:50px"><a class="u">否</a></div><div class="c" style="left:1664px;width:52px"></div></div>
<div class="row alt" style="top:93px"><div class="c" style="left:0px;width:43px"><span class="num">4</span></div><div class="c" style="left:43px;width:32px"><div class="cb"></div></div><div class="c ctr" style="left:75px;width:146px"><a>收款</a><a style="margin-left:10px">强制结算</a></div><div class="c" style="left:221px;width:113px"><span class="num">2022-02-17</span></div><div class="c up" style="left:334px;width:103px">销售退货单</div><div class="c" style="left:437px;width:165px"><a class="lnk">XSTHD-20220217-0001</a></div><div class="c up" style="left:602px;width:202px">郑晓配送测试</div><div class="c up" style="left:804px;width:100px">迪迦</div><div class="c" style="left:904px;width:110px"></div><div class="c" style="left:1014px;width:100px">默认仓库</div><div class="c rt" style="left:1114px;width:100px"><span class="num">-290</span></div><div class="c rt" style="left:1214px;width:100px"><span class="num">-336.4</span></div><div class="c rt" style="left:1314px;width:100px"><span class="num">0</span></div><div class="c rt" style="left:1414px;width:100px"><span class="num">0</span></div><div class="c rt" style="left:1514px;width:100px"><span class="num">-336.4</span></div><div class="c ctr" style="left:1614px;width:50px"><a class="u">否</a></div><div class="c" style="left:1664px;width:52px"></div></div>
<div class="row" style="top:124px"><div class="c" style="left:0px;width:43px"><span class="num">5</span></div><div class="c" style="left:43px;width:32px"><div class="cb"></div></div><div class="c ctr" style="left:75px;width:146px"><a>收款</a><a style="margin-left:10px">强制结算</a></div><div class="c" style="left:221px;width:113px"><span class="num">2022-02-17</span></div><div class="c up" style="left:334px;width:103px">销售出库单</div><div class="c" style="left:437px;width:165px"><a class="lnk">XSCKD-20220217-0003</a></div><div class="c up" style="left:602px;width:202px">舞法天女</div><div class="c up" style="left:804px;width:100px"></div><div class="c" style="left:904px;width:110px"></div><div class="c" style="left:1014px;width:100px">有钱仓库</div><div class="c rt" style="left:1114px;width:100px"><span class="num">130</span></div><div class="c rt" style="left:1214px;width:100px"><span class="num">150.8</span></div><div class="c rt" style="left:1314px;width:100px"><span class="num">0</span></div><div class="c rt" style="left:1414px;width:100px"><span class="num">0</span></div><div class="c rt" style="left:1514px;width:100px"><span class="num">150.8</span></div><div class="c ctr" style="left:1614px;width:50px"><a class="u">否</a></div><div class="c" style="left:1664px;width:52px"></div></div>
<div class="row alt" style="top:155px"><div class="c" style="left:0px;width:43px"><span class="num">6</span></div><div class="c" style="left:43px;width:32px"><div class="cb"></div></div><div class="c ctr" style="left:75px;width:146px"><a>收款</a><a style="margin-left:10px">强制结算</a></div><div class="c" style="left:221px;width:113px"><span class="num">2022-02-17</span></div><div class="c up" style="left:334px;width:103px">销售出库单</div><div class="c" style="left:437px;width:165px"><a class="lnk">XSCKD-20220217-0001</a></div><div class="c up" style="left:602px;width:202px">郑晓配送测试</div><div class="c up" style="left:804px;width:100px">迪迦</div><div class="c" style="left:904px;width:110px"></div><div class="c" style="left:1014px;width:100px">默认仓库</div><div class="c rt" style="left:1114px;width:100px"><span class="num">30</span></div><div class="c rt" style="left:1214px;width:100px"><span class="num">30</span></div><div class="c rt" style="left:1314px;width:100px"><span class="num">0</span></div><div class="c rt" style="left:1414px;width:100px"><span class="num">0</span></div><div class="c rt" style="left:1514px;width:100px"><span class="num">30</span></div><div class="c ctr" style="left:1614px;width:50px"><a class="u">否</a></div><div class="c" style="left:1664px;width:52px"></div></div>
<div class="row" style="top:186px"><div class="c" style="left:0px;width:43px"><span class="num">7</span></div><div class="c" style="left:43px;width:32px"><div class="cb dis"></div></div><div class="c" style="left:75px;width:146px"></div><div class="c" style="left:221px;width:113px"></div><div class="c" style="left:334px;width:103px"></div><div class="c" style="left:437px;width:165px"></div><div class="c" style="left:602px;width:202px"></div><div class="c" style="left:804px;width:100px"></div><div class="c" style="left:904px;width:110px"></div><div class="c" style="left:1014px;width:100px"></div><div class="c" style="left:1114px;width:100px"></div><div class="c" style="left:1214px;width:100px"></div><div class="c" style="left:1314px;width:100px"></div><div class="c" style="left:1414px;width:100px"></div><div class="c" style="left:1514px;width:100px"></div><div class="c" style="left:1614px;width:50px"></div><div class="c" style="left:1664px;width:52px"></div></div>
<div class="row alt" style="top:217px"><div class="c" style="left:0px;width:43px"><span class="num">8</span></div><div class="c" style="left:43px;width:32px"><div class="cb dis"></div></div><div class="c" style="left:75px;width:146px"></div><div class="c" style="left:221px;width:113px"></div><div class="c" style="left:334px;width:103px"></div><div class="c" style="left:437px;width:165px"></div><div class="c" style="left:602px;width:202px"></div><div class="c" style="left:804px;width:100px"></div><div class="c" style="left:904px;width:110px"></div><div class="c" style="left:1014px;width:100px"></div><div class="c" style="left:1114px;width:100px"></div><div class="c" style="left:1214px;width:100px"></div><div class="c" style="left:1314px;width:100px"></div><div class="c" style="left:1414px;width:100px"></div><div class="c" style="left:1514px;width:100px"></div><div class="c" style="left:1614px;width:50px"></div><div class="c" style="left:1664px;width:52px"></div></div>
<div class="row" style="top:248px"><div class="c" style="left:0px;width:43px"><span class="num">9</span></div><div class="c" style="left:43px;width:32px"><div class="cb dis"></div></div><div class="c" style="left:75px;width:146px"></div><div class="c" style="left:221px;width:113px"></div><div class="c" style="left:334px;width:103px"></div><div class="c" style="left:437px;width:165px"></div><div class="c" style="left:602px;width:202px"></div><div class="c" style="left:804px;width:100px"></div><div class="c" style="left:904px;width:110px"></div><div class="c" style="left:1014px;width:100px"></div><div class="c" style="left:1114px;width:100px"></div><div class="c" style="left:1214px;width:100px"></div><div class="c" style="left:1314px;width:100px"></div><div class="c" style="left:1414px;width:100px"></div><div class="c" style="left:1514px;width:100px"></div><div class="c" style="left:1614px;width:50px"></div><div class="c" style="left:1664px;width:52px"></div></div>
<div class="row alt hl" style="top:279px"><div class="c" style="left:0px;width:43px"><span class="num">10</span></div><div class="c" style="left:43px;width:32px"><div class="cb dis"></div></div><div class="c" style="left:75px;width:146px"></div><div class="c" style="left:221px;width:113px"></div><div class="c" style="left:334px;width:103px"></div><div class="c" style="left:437px;width:165px"></div><div class="c" style="left:602px;width:202px"></div><div class="c" style="left:804px;width:100px"></div><div class="c" style="left:904px;width:110px"></div><div class="c" style="left:1014px;width:100px"></div><div class="c" style="left:1114px;width:100px"></div><div class="c" style="left:1214px;width:100px"></div><div class="c" style="left:1314px;width:100px"></div><div class="c" style="left:1414px;width:100px"></div><div class="c" style="left:1514px;width:100px"></div><div class="c" style="left:1614px;width:50px"></div><div class="c" style="left:1664px;width:52px"></div></div>
<div class="row" style="top:310px"><div class="c" style="left:0px;width:43px"><span class="num">11</span></div><div class="c" style="left:43px;width:32px"><div class="cb dis"></div></div><div class="c" style="left:75px;width:146px"></div><div class="c" style="left:221px;width:113px"></div><div class="c" style="left:334px;width:103px"></div><div class="c" style="left:437px;width:165px"></div><div class="c" style="left:602px;width:202px"></div><div class="c" style="left:804px;width:100px"></div><div class="c" style="left:904px;width:110px"></div><div class="c" style="left:1014px;width:100px"></div><div class="c" style="left:1114px;width:100px"></div><div class="c" style="left:1214px;width:100px"></div><div class="c" style="left:1314px;width:100px"></div><div class="c" style="left:1414px;width:100px"></div><div class="c" style="left:1514px;width:100px"></div><div class="c" style="left:1614px;width:50px"></div><div class="c" style="left:1664px;width:52px"></div></div>
<div class="row alt" style="top:341px"><div class="c" style="left:0px;width:43px"><span class="num">12</span></div><div class="c" style="left:43px;width:32px"><div class="cb dis"></div></div><div class="c" style="left:75px;width:146px"></div><div class="c" style="left:221px;width:113px"></div><div class="c" style="left:334px;width:103px"></div><div class="c" style="left:437px;width:165px"></div><div class="c" style="left:602px;width:202px"></div><div class="c" style="left:804px;width:100px"></div><div class="c" style="left:904px;width:110px"></div><div class="c" style="left:1014px;width:100px"></div><div class="c" style="left:1114px;width:100px"></div><div class="c" style="left:1214px;width:100px"></div><div class="c" style="left:1314px;width:100px"></div><div class="c" style="left:1414px;width:100px"></div><div class="c" style="left:1514px;width:100px"></div><div class="c" style="left:1614px;width:50px"></div><div class="c" style="left:1664px;width:52px"></div></div>
<div class="row" style="top:372px"><div class="c" style="left:0px;width:43px"><span class="num">13</span></div><div class="c" style="left:43px;width:32px"><div class="cb dis"></div></div><div class="c" style="left:75px;width:146px"></div><div class="c" style="left:221px;width:113px"></div><div class="c" style="left:334px;width:103px"></div><div class="c" style="left:437px;width:165px"></div><div class="c" style="left:602px;width:202px"></div><div class="c" style="left:804px;width:100px"></div><div class="c" style="left:904px;width:110px"></div><div class="c" style="left:1014px;width:100px"></div><div class="c" style="left:1114px;width:100px"></div><div class="c" style="left:1214px;width:100px"></div><div class="c" style="left:1314px;width:100px"></div><div class="c" style="left:1414px;width:100px"></div><div class="c" style="left:1514px;width:100px"></div><div class="c" style="left:1614px;width:50px"></div><div class="c" style="left:1664px;width:52px"></div></div>
<div class="row alt" style="top:403px"><div class="c" style="left:0px;width:43px"><span class="num">14</span></div><div class="c" style="left:43px;width:32px"><div class="cb dis"></div></div><div class="c" style="left:75px;width:146px"></div><div class="c" style="left:221px;width:113px"></div><div class="c" style="left:334px;width:103px"></div><div class="c" style="left:437px;width:165px"></div><div class="c" style="left:602px;width:202px"></div><div class="c" style="left:804px;width:100px"></div><div class="c" style="left:904px;width:110px"></div><div class="c" style="left:1014px;width:100px"></div><div class="c" style="left:1114px;width:100px"></div><div class="c" style="left:1214px;width:100px"></div><div class="c" style="left:1314px;width:100px"></div><div class="c" style="left:1414px;width:100px"></div><div class="c" style="left:1514px;width:100px"></div><div class="c" style="left:1614px;width:50px"></div><div class="c" style="left:1664px;width:52px"></div></div>
<div class="row" style="top:434px"><div class="c" style="left:0px;width:43px"><span class="num">15</span></div><div class="c" style="left:43px;width:32px"><div class="cb dis"></div></div><div class="c" style="left:75px;width:146px"></div><div class="c" style="left:221px;width:113px"></div><div class="c" style="left:334px;width:103px"></div><div class="c" style="left:437px;width:165px"></div><div class="c" style="left:602px;width:202px"></div><div class="c" style="left:804px;width:100px"></div><div class="c" style="left:904px;width:110px"></div><div class="c" style="left:1014px;width:100px"></div><div class="c" style="left:1114px;width:100px"></div><div class="c" style="left:1214px;width:100px"></div><div class="c" style="left:1314px;width:100px"></div><div class="c" style="left:1414px;width:100px"></div><div class="c" style="left:1514px;width:100px"></div><div class="c" style="left:1614px;width:50px"></div><div class="c" style="left:1664px;width:52px"></div></div>
<div class="row alt" style="top:465px"><div class="c" style="left:0px;width:43px"><span class="num">16</span></div><div class="c" style="left:43px;width:32px"><div class="cb dis"></div></div><div class="c" style="left:75px;width:146px"></div><div class="c" style="left:221px;width:113px"></div><div class="c" style="left:334px;width:103px"></div><div class="c" style="left:437px;width:165px"></div><div class="c" style="left:602px;width:202px"></div><div class="c" style="left:804px;width:100px"></div><div class="c" style="left:904px;width:110px"></div><div class="c" style="left:1014px;width:100px"></div><div class="c" style="left:1114px;width:100px"></div><div class="c" style="left:1214px;width:100px"></div><div class="c" style="left:1314px;width:100px"></div><div class="c" style="left:1414px;width:100px"></div><div class="c" style="left:1514px;width:100px"></div><div class="c" style="left:1614px;width:50px"></div><div class="c" style="left:1664px;width:52px"></div></div>
<div class="row" style="top:496px"><div class="c" style="left:0px;width:43px"><span class="num">17</span></div><div class="c" style="left:43px;width:32px"><div class="cb dis"></div></div><div class="c" style="left:75px;width:146px"></div><div class="c" style="left:221px;width:113px"></div><div class="c" style="left:334px;width:103px"></div><div class="c" style="left:437px;width:165px"></div><div class="c" style="left:602px;width:202px"></div><div class="c" style="left:804px;width:100px"></div><div class="c" style="left:904px;width:110px"></div><div class="c" style="left:1014px;width:100px"></div><div class="c" style="left:1114px;width:100px"></div><div class="c" style="left:1214px;width:100px"></div><div class="c" style="left:1314px;width:100px"></div><div class="c" style="left:1414px;width:100px"></div><div class="c" style="left:1514px;width:100px"></div><div class="c" style="left:1614px;width:50px"></div><div class="c" style="left:1664px;width:52px"></div></div>
<div class="row alt" style="top:527px"><div class="c" style="left:0px;width:43px"><span class="num">18</span></div><div class="c" style="left:43px;width:32px"><div class="cb dis"></div></div><div class="c" style="left:75px;width:146px"></div><div class="c" style="left:221px;width:113px"></div><div class="c" style="left:334px;width:103px"></div><div class="c" style="left:437px;width:165px"></div><div class="c" style="left:602px;width:202px"></div><div class="c" style="left:804px;width:100px"></div><div class="c" style="left:904px;width:110px"></div><div class="c" style="left:1014px;width:100px"></div><div class="c" style="left:1114px;width:100px"></div><div class="c" style="left:1214px;width:100px"></div><div class="c" style="left:1314px;width:100px"></div><div class="c" style="left:1414px;width:100px"></div><div class="c" style="left:1514px;width:100px"></div><div class="c" style="left:1614px;width:50px"></div><div class="c" style="left:1664px;width:52px"></div></div>
</div>
<div class="abs" style="left:1716px;top:32px;width:19px;height:554px;background:#f1f1f1;border-left:1px solid #ccc;border-right:1px solid #ccc"></div>
<div class="abs" style="left:1721px;top:39px;width:0;height:0;border-left:4.5px solid transparent;border-right:4.5px solid transparent;border-bottom:5px solid #a3a3a3"></div>
<div class="abs" style="left:1719px;top:50px;width:13px;height:536px;background:#c1c1c1"></div>
<div class="abs" style="left:0;top:586px;width:1735px;height:1px;background:#f3f3f7"></div>
<div class="abs" style="left:0;top:587px;width:1735px;height:1px;background:#dadae3"></div>
<div class="abs" style="left:0;top:588px;width:1735px;height:31px;background:#f5f5f5"><div class="c" style="left:0px;width:43px;height:30px;border-bottom:none"><b>合计</b></div><div class="c" style="left:43px;width:32px;height:30px;border-bottom:none"></div><div class="c" style="left:75px;width:146px;height:30px;border-bottom:none"></div><div class="c" style="left:221px;width:113px;height:30px;border-bottom:none"></div><div class="c" style="left:334px;width:103px;height:30px;border-bottom:none"></div><div class="c" style="left:437px;width:165px;height:30px;border-bottom:none"></div><div class="c" style="left:602px;width:202px;height:30px;border-bottom:none"></div><div class="c" style="left:804px;width:100px;height:30px;border-bottom:none"></div><div class="c" style="left:904px;width:110px;height:30px;border-bottom:none"></div><div class="c" style="left:1014px;width:100px;height:30px;border-bottom:none"></div><div class="c rt up" style="left:1114px;width:100px;height:30px;border-bottom:none"><b class="num red">0</b></div><div class="c rt up" style="left:1214px;width:100px;height:30px;border-bottom:none"><b class="num red">-1,006.4</b></div><div class="c" style="left:1314px;width:100px;height:30px;border-bottom:none"></div><div class="c" style="left:1414px;width:100px;height:30px;border-bottom:none"></div><div class="c rt up" style="left:1514px;width:100px;height:30px;border-bottom:none"><b class="num red">-1,006.4</b></div><div class="c" style="left:1614px;width:50px;height:30px;border-bottom:none"></div><div class="c" style="left:1664px;width:52px;height:30px;border-bottom:none"></div><div class="c" style="left:1716px;width:18px;height:30px;border-bottom:none"></div><div class="abs" style="left:1734px;top:0;width:1px;height:30px;background:#ccc"></div></div>
<div class="abs" style="left:0;top:619px;width:1735px;height:1px;background:#dadae3"></div>
</div>
<div id="pager">
<div class="pb" style="left:692px;width:45px">首页</div>
<div class="pb" style="left:742px;width:56px"><i class="tl"></i>上页</div>
<div class="pt" style="left:810px">第 <span class="num" style="color:#5c6c9e">(1/1)</span> 页</div>
<div class="pb" style="left:881px;width:55px">下页<i class="tr"></i></div>
<div class="pb" style="left:941px;width:45px">尾页</div>
<div class="pt" style="left:1028px">跳转到</div>
<div class="pi" style="left:1068px">1</div>
<div class="pt" style="left:1096px">页</div>
<div class="abs" style="left:1114px;top:887px;width:36px;height:20px;border-radius:6px;background:#4a64a6;color:#fff;font-size:12px;line-height:22px;text-align:center">跳转</div>
<div class="pt" style="left:1197px">共 <span class="num" style="color:#4a64a6">6</span> 条记录</div>
<div class="pt" style="left:1273px">每页显示</div>
<div class="pi" style="left:1325px;color:#4a64a6">20</div>
<div class="pt" style="left:1353px">行</div>
</div>

<div id="pop">
<div class="abs" style="left:12px;top:18px;font-size:16px;line-height:20px;color:#333;white-space:nowrap">消息提示</div>
<svg class="abs" style="left:392px;top:12px" width="16" height="16" viewBox="0 0 16 16"><path d="M1 1 L15 15 M15 1 L1 15" stroke="#666" stroke-width="1.1"/></svg>
<div class="abs" style="left:12px;top:56px;width:26px;height:26px;background:#ff5722"><svg width="26" height="26" viewBox="0 0 26 26"><path d="M13 4.2 C7.8 4.2 3.8 7.6 3.8 12 C3.8 15.8 6.8 18.9 10.8 19.6 L13 22.6 L15.2 19.6 C19.2 18.9 22.2 15.8 22.2 12 C22.2 7.6 18.2 4.2 13 4.2 Z" fill="none" stroke="#fff" stroke-width="1.5"/><circle cx="9" cy="12" r="1.2" fill="#fff"/><circle cx="13" cy="12" r="1.2" fill="#fff"/><circle cx="17" cy="12" r="1.2" fill="#fff"/></svg></div>
<div class="abs" style="left:34px;top:54px;width:6px;height:6px;border-radius:3px;background:#e8222a"></div>
<div class="abs" style="left:36px;top:60px;font-size:13px;line-height:20px;font-weight:bold;color:#222;white-space:nowrap">【系统消息】</div>
<div class="abs" style="left:12px;top:92px;width:396px;height:90px;border-top:1px solid #eee;border-bottom:1px solid #c5cde0;overflow:hidden">
<div class="pm" style="top:11px">你有一个配送任务被取消，单据号【<span class="pl">PSD-20220110-001</span>】</div>
<div class="pm" style="top:55px">你有一个配送任务被取消，单据号【<span class="pl">PSD-20211223-001</span>】</div>
<div class="abs" style="left:379px;top:0;width:17px;height:88px;background:#f1f1f1"></div>
<div class="abs" style="left:384px;top:7px;width:0;height:0;border-left:3.5px solid transparent;border-right:3.5px solid transparent;border-bottom:4px solid #a3a3a3"></div>
<div class="abs" style="left:384px;top:77px;width:0;height:0;border-left:3.5px solid transparent;border-right:3.5px solid transparent;border-top:4px solid #a3a3a3"></div>
</div>
<div class="abs" style="left:15px;top:195px;font-size:12px;line-height:18px;color:#888;white-space:nowrap">本次忽略全部</div>
<div class="abs" style="right:15px;top:195px;font-size:12px;line-height:18px;color:#888;white-space:nowrap">永远不再提醒</div>
</div>
<div class="abs" style="left:1911px;top:877px;width:7px;height:50px;background:#62717d;border:1.5px solid #3d4e5c;border-radius:3.5px 3.5px 0 0"></div>
<div class="abs" style="left:1913px;top:902px;width:3px;height:20px;background:#1eaaf1"></div>

</body>
</html>
